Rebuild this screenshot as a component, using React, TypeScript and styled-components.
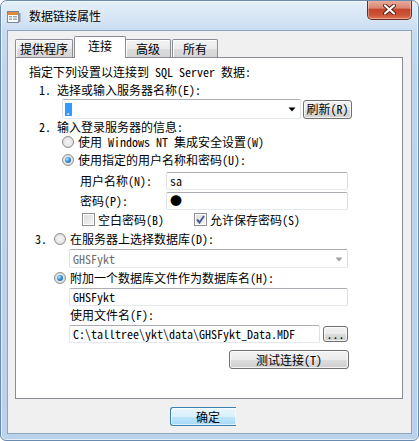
import React from "react";
import styled, { createGlobalStyle, css } from "styled-components";

const FONT = `"Noto Sans Mono CJK SC", "Noto Sans CJK SC", "Liberation Mono", monospace`;

const GlobalStyle = createGlobalStyle`
  html, body { margin: 0; padding: 0; background: #ffffff; }
  #root { width: 419px; height: 441px; }
`;

const Window = styled.div`
  box-sizing: border-box;
  width: 419px;
  height: 441px;
  border: 1px solid #6a8bb0;
  border-radius: 7px 7px 6px 6px;
  background: linear-gradient(180deg, #e3eef9 0px, #d6e5f5 18px, #c9dcf0 29px, #bfd5ec 70px, #bbd2ea 100%);
  box-shadow: inset 0 0 0 1px rgba(255, 255, 255, 0.6);
  padding: 0 6px 6px 6px;
  display: flex;
  flex-direction: column;
  font-family: ${FONT};
  font-size: 12px;
  line-height: 14px;
  color: #000;
  overflow: hidden;
`;

const TitleBar = styled.div`
  height: 29px;
  display: flex;
  align-items: center;
  flex-shrink: 0;
`;

const TitleIcon = styled.svg`
  width: 14px;
  height: 14px;
  flex-shrink: 0;
  margin-top: 2px;
`;

const TitleText = styled.span`
  margin-left: 8px;
  margin-top: 1px;
  color: #000;
  text-shadow: 0 0 6px rgba(255, 255, 255, 0.9);
`;

const CloseButton = styled.div`
  margin-left: auto;
  align-self: flex-start;
  margin-top: -1px;
  box-sizing: border-box;
  width: 45px;
  height: 20px;
  border: 1px solid #6b2b1e;
  border-top: none;
  border-radius: 0 0 5px 5px;
  background: linear-gradient(180deg, #eab1a4 0%, #dc8571 42%, #c6452a 50%, #cc5537 80%, #e07a55 100%);
  box-shadow: inset 0 0 0 1px rgba(255, 255, 255, 0.35);
  display: flex;
  align-items: center;
  justify-content: center;
`;

const Client = styled.div`
  flex: 1;
  background: #f0f0f0;
  border: 1px solid #8ba4bf;
  padding: 5px 8px 0 7px;
  display: flex;
  flex-direction: column;
`;

const TabStrip = styled.div`
  height: 21px;
  display: flex;
  align-items: flex-end;
  position: relative;
  z-index: 1;
  flex-shrink: 0;
`;

const Tab = styled.div<{ $w: number; $ml: number; $active?: boolean }>`
  box-sizing: border-box;
  width: ${(p) => p.$w}px;
  margin-left: ${(p) => p.$ml}px;
  height: 18px;
  border: 1px solid #898c95;
  border-bottom: none;
  border-radius: 2px 2px 0 0;
  background: linear-gradient(180deg, #f3f3f3 0%, #ebebeb 50%, #dddddd 51%, #d4d4d4 100%);
  box-shadow: inset 0 1px 0 #fff, inset 1px 0 0 #fff;
  display: flex;
  align-items: center;
  justify-content: center;
  ${(p) =>
    p.$active &&
    css`
      height: 22px;
      margin-bottom: -1px;
      background: #ffffff;
      box-shadow: none;
      padding-bottom: 3px;
      position: relative;
      z-index: 2;
    `}
`;

const Panel = styled.div`
  box-sizing: border-box;
  height: 342px;
  background: #ffffff;
  border: 1px solid #898c95;
  padding: 7px 0 0 13px;
  display: flex;
  flex-direction: column;
  flex-shrink: 0;
`;

const Line = styled.div<{ $mt?: number; $h: number; $pl?: number }>`
  display: flex;
  align-items: center;
  flex-shrink: 0;
  white-space: nowrap;
  height: ${(p) => p.$h}px;
  margin-top: ${(p) => p.$mt ?? 0}px;
  padding-left: ${(p) => p.$pl ?? 0}px;
`;

const Num = styled.span<{ $w: number }>`
  display: inline-block;
  width: ${(p) => p.$w}px;
  flex-shrink: 0;
`;

const FieldLabel = styled.span`
  display: inline-block;
  width: 86px;
  flex-shrink: 0;
`;

const Option = styled.span`
  display: inline-flex;
  align-items: center;
  gap: 4px;
`;

const CheckItem = styled.span<{ $w?: number }>`
  display: inline-flex;
  align-items: center;
  gap: 3px;
  ${(p) => p.$w && `width: ${p.$w}px;`}
`;

const Radio = styled.span<{ $checked?: boolean }>`
  box-sizing: border-box;
  width: 12px;
  height: 12px;
  border-radius: 50%;
  border: 1px solid #8e8f8f;
  background: radial-gradient(circle at 50% 50%, #f6f6f6 0%, #e8e8e8 50%, #cdcdcd 100%);
  flex-shrink: 0;
  position: relative;
  ${(p) =>
    p.$checked &&
    css`
      &::after {
        content: "";
        position: absolute;
        left: 2px;
        top: 2px;
        width: 6px;
        height: 6px;
        border-radius: 50%;
        background: radial-gradient(circle at 35% 35%, #c4e8ff 0%, #3f9be0 40%, #0d4a8a 100%);
      }
    `}
`;

const Check = styled.span`
  box-sizing: border-box;
  width: 13px;
  height: 13px;
  border: 1px solid #8e8f8f;
  background: linear-gradient(135deg, #dcdcdc 0%, #f6f6f6 100%);
  box-shadow: inset 0 0 0 1px #ffffff;
  display: flex;
  align-items: center;
  justify-content: center;
  flex-shrink: 0;
`;

const TextBox = styled.div<{ $w: number; $h?: number; $disabled?: boolean }>`
  box-sizing: border-box;
  width: ${(p) => p.$w}px;
  height: ${(p) => p.$h ?? 18}px;
  border: 1px solid;
  border-color: #abadb3 #dbdfe6 #e3e9ef #e2e3ea;
  border-radius: 2px;
  background: #ffffff;
  display: flex;
  align-items: center;
  padding-left: 3px;
  color: ${(p) => (p.$disabled ? "#6d6d6d" : "#000")};
  flex-shrink: 0;
  position: relative;
`;

const Selection = styled.span`
  display: inline-block;
  width: 7px;
  height: 13px;
  background: #3399ff;
  color: #fff;
  line-height: 13px;
  margin-left: -1px;
`;

const DropArrow = styled.svg`
  position: absolute;
  right: 4px;
  top: 50%;
  width: 8px;
  height: 5px;
  margin-top: -2px;
`;

const PushButton = styled.div<{ $w: number; $h?: number; $ml?: number }>`
  box-sizing: border-box;
  width: ${(p) => p.$w}px;
  height: ${(p) => p.$h ?? 19}px;
  margin-left: ${(p) => p.$ml ?? 0}px;
  border: 1px solid #707070;
  border-radius: 3px;
  background: linear-gradient(180deg, #f2f2f2 0%, #ebebeb 50%, #dddddd 51%, #cfcfcf 100%);
  box-shadow: inset 0 0 0 1px rgba(255, 255, 255, 0.75);
  display: flex;
  align-items: center;
  justify-content: center;
  flex-shrink: 0;
`;

const Footer = styled.div`
  display: flex;
  margin-top: 8px;
  padding-left: 155px;
`;

const DefaultButton = styled.div`
  box-sizing: border-box;
  width: 66px;
  height: 19px;
  border: 1px solid #3c7fb1;
  border-right: none;
  border-radius: 3px 0 0 3px;
  background: linear-gradient(180deg, #eaf6fd 0%, #d9f0fc 50%, #bee6fd 51%, #a7d9f5 100%);
  box-shadow: inset 0 0 0 1px rgba(255, 255, 255, 0.6);
  display: flex;
  align-items: center;
  justify-content: center;
  padding-left: 9px;
`;

const Arrow = ({ color }: { color: string }) => (
  <DropArrow viewBox="0 0 8 5">
    <path d="M0.5 0.5 L7.5 0.5 L4 4.5 Z" fill={color} />
  </DropArrow>
);

export default function App() {
  return (
    <>
      <GlobalStyle />
      <Window>
        <TitleBar>
          <TitleIcon viewBox="0 0 14 14">
            <rect x="0.5" y="1.5" width="11" height="11" fill="#ffffff" stroke="#7a8796" />
            <rect x="1" y="2" width="10" height="3" fill="#e08a3c" />
            <rect x="2" y="6" width="3" height="1.5" fill="#9aa6b4" />
            <rect x="6" y="6" width="4" height="1.5" fill="#9aa6b4" />
            <rect x="2" y="8.5" width="3" height="1.5" fill="#9aa6b4" />
            <rect x="6" y="8.5" width="4" height="1.5" fill="#9aa6b4" />
            <rect x="11.5" y="3" width="2" height="9" fill="#8c98a6" />
          </TitleIcon>
          <TitleText>数据链接属性</TitleText>
          <CloseButton>
            <svg width="13" height="11" viewBox="0 0 13 11">
              <path d="M2 1.5 L11 9.5 M11 1.5 L2 9.5" stroke="#5a1f14" strokeWidth="4" strokeLinecap="round" />
              <path d="M2 1.5 L11 9.5 M11 1.5 L2 9.5" stroke="#ffffff" strokeWidth="2.2" strokeLinecap="round" />
            </svg>
          </CloseButton>
        </TitleBar>
        <Client>
          <TabStrip>
            <Tab $w={58} $ml={0}>提供程序</Tab>
            <Tab $w={52} $ml={1} $active>连接</Tab>
            <Tab $w={46} $ml={-1}>高级</Tab>
            <Tab $w={46} $ml={1}>所有</Tab>
          </TabStrip>
          <Panel>
            <Line $h={14}>指定下列设置以连接到 SQL Server 数据:</Line>
            <Line $mt={4} $h={14} $pl={10}>
              <Num $w={18}>1.</Num>选择或输入服务器名称(E):
            </Line>
            <Line $mt={2} $h={20} $pl={33}>
              <TextBox $w={239} $h={20}>
                <Selection>.</Selection>
                <Arrow color="#000000" />
              </TextBox>
              <PushButton $w={49} $ml={2}>刷新(R)</PushButton>
            </Line>
            <Line $mt={1} $h={14} $pl={10}>
              <Num $w={18}>2.</Num>输入登录服务器的信息:
            </Line>
            <Line $h={16} $pl={33}>
              <Option>
                <Radio />
                使用 Windows NT 集成安全设置(W)
              </Option>
            </Line>
            <Line $mt={2} $h={16} $pl={33}>
              <Option>
                <Radio $checked />
                使用指定的用户名称和密码(U):
              </Option>
            </Line>
            <Line $mt={4} $h={18} $pl={51}>
              <FieldLabel>用户名称(N):</FieldLabel>
              <TextBox $w={182}>sa</TextBox>
            </Line>
            <Line $mt={2} $h={18} $pl={51}>
              <FieldLabel>密码(P):</FieldLabel>
              <TextBox $w={182}>●</TextBox>
            </Line>
            <Line $mt={2} $h={15} $pl={53}>
              <CheckItem $w={112}>
                <Check />
                空白密码(B)
              </CheckItem>
              <CheckItem>
                <Check>
                  <svg width="9" height="9" viewBox="0 0 9 9">
                    <path d="M1 4.5 L3.5 7.5 L8 1" fill="none" stroke="#4a5f97" strokeWidth="2" />
                  </svg>
                </Check>
                允许保存密码(S)
              </CheckItem>
            </Line>
            <Line $mt={4} $h={16} $pl={6}>
              <Num $w={19}>3.</Num>
              <Option>
                <Radio />
                在服务器上选择数据库(D):
              </Option>
            </Line>
            <Line $mt={2} $h={19} $pl={40}>
              <TextBox $w={279} $h={19} $disabled>
                GHSFykt
                <Arrow color="#a0a0a0" />
              </TextBox>
            </Line>
            <Line $mt={2} $h={15} $pl={25}>
              <Option>
                <Radio $checked />
                附加一个数据库文件作为数据库名(H):
              </Option>
            </Line>
            <Line $mt={3} $h={18} $pl={40}>
              <TextBox $w={279}>GHSFykt</TextBox>
            </Line>
            <Line $mt={2} $h={14} $pl={41}>使用文件名(F):</Line>
            <Line $mt={3} $h={18} $pl={40}>
              <TextBox $w={251}>C:\talltree\ykt\data\GHSFykt_Data.MDF</TextBox>
              <PushButton $w={25} $h={16} $ml={3}>...</PushButton>
            </Line>
            <Line $mt={7} $h={19} $pl={200}>
              <PushButton $w={120}>测试连接(T)</PushButton>
            </Line>
          </Panel>
          <Footer>
            <DefaultButton>确定</DefaultButton>
          </Footer>
        </Client>
      </Window>
    </>
  );
}
